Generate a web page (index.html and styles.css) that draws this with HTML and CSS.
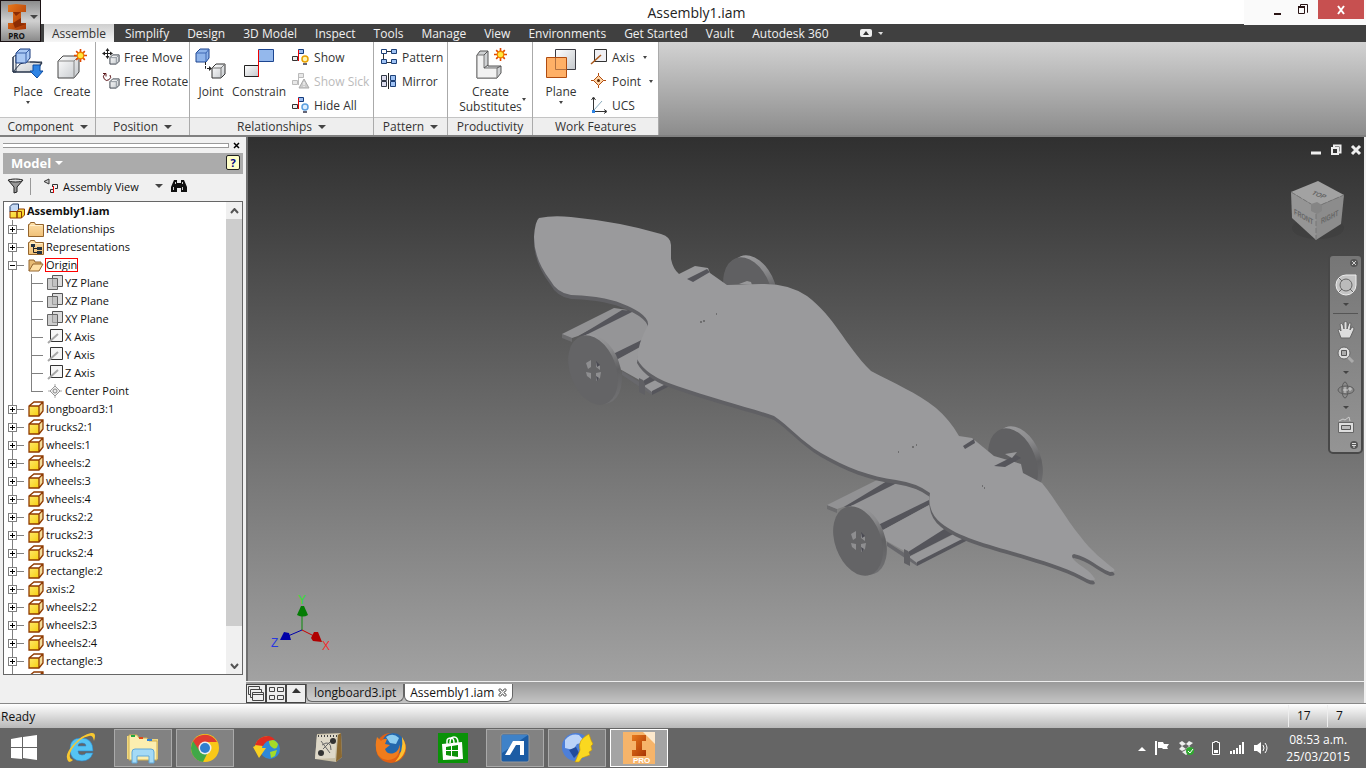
FILE: index.html
```html
<!DOCTYPE html>
<html lang="en">

<head>
    <meta charset="UTF-8">
    <meta name="viewport" content="width=device-width, initial-scale=1.0">
    <title>Assembly1.iam</title>
    <link rel="stylesheet" href="styles.css">
</head>

<body>
    <!-- shared icons -->
    <svg class="defs" aria-hidden="true">
        <defs>
            <linearGradient id="steel" x1="0" y1="0" x2="1" y2="1">
                <stop offset="0" stop-color="#fff" />
                <stop offset="1" stop-color="#c4c8cc" />
            </linearGradient>
            <linearGradient id="gold" x1="0" y1="0" x2="1" y2="1">
                <stop offset="0" stop-color="#ffe96a" />
                <stop offset="1" stop-color="#f5cf10" />
            </linearGradient>
            <linearGradient id="folder" x1="0" y1="0" x2="0" y2="1">
                <stop offset="0" stop-color="#ffe0a8" />
                <stop offset="1" stop-color="#efc078" />
            </linearGradient>
            <linearGradient id="rust" x1="0" y1="0" x2="1" y2="1">
                <stop offset="0" stop-color="#e8791c" />
                <stop offset="1" stop-color="#a83404" />
            </linearGradient>
        </defs>
        <symbol id="i-cube" viewBox="0 0 12 12">
            <path d="M1 4l3-3h7v7l-3 3H1z" fill="url(#steel)" stroke="#333a44" />
            <path d="M1 4h7v7M8 4l3-3" fill="none" stroke="#8a9098" />
        </symbol>
        <symbol id="i-part" viewBox="0 0 16 16">
            <path d="M1 5l5-4h9l-4 4z" fill="#fff" />
            <path d="M1 5h10v10H1z" fill="url(#gold)" />
            <path d="M11 5l4-4v9l-4 5z" fill="#f3dc9c" />
            <path d="M1 5l5-4h9v9l-4 5H1zM1 5h10v10M11 5l4-4" fill="none" stroke="#8f3a00" stroke-width="1.3" />
        </symbol>
        <symbol id="i-folder" viewBox="0 0 16 16">
            <path d="M.5 3.500h1l1-2h4l1 2h8v12H.5z" fill="url(#folder)" stroke="#94642c" />
            <path d="M2 4.500h12" stroke="#fff0cc" />
        </symbol>
        <symbol id="i-plane" viewBox="0 0 16 16">
            <path d="M5.500 .5h10v11h-10z" fill="#ddd" stroke="#555" />
            <path d="M.5 3.500h10v11H.5z" fill="#b8b8b8" fill-opacity=".7" stroke="#666" />
        </symbol>
        <symbol id="i-axis" viewBox="0 0 16 16">
            <path d="M3.500 .5h12v12h-12z" fill="#f6f6f6" stroke="#333" />
            <path d="M1 14L11 5" stroke="#a8a8a8" stroke-width="2" />
        </symbol>
        <symbol id="i-burst" viewBox="0 0 12 12">
            <path d="M6 0v12M0 6h12M2 2l8 8M10 2l-8 8" stroke="#e04800" stroke-width="1.5" />
            <circle cx="6" cy="6" r="3" fill="#ffe83c" stroke="#f08000" stroke-width="1.2" />
        </symbol>
        <symbol id="i-rel" viewBox="0 0 18 18">
            <path d="M6.500 1.500h5v4h-5z" fill="#9cbcee" stroke="#123a7c" />
            <path d="M.5 8.500h5v4h-5z" fill="#eee" stroke="#333" />
            <path d="M6.500 2v11" stroke="#e00" />
        </symbol>
    </svg>

    <header class="header">
        <button class="app-btn" aria-label="Application menu">
            <svg width="24" height="28" viewBox="0 0 24 28">
                <path d="M3 2l8-1 10 1v7h-5v11h5v6l-9 1-9-1v-6h5V9H3z" fill="url(#rust)" />
                <path d="M8 9h8l-5 4zM8 20l8-5v5l5 1-11 4z" fill="#8c2c04" />
            </svg>
            <span class="arrow"></span>
            <b>PRO</b>
        </button>
        <div class="titlebar">
            <h1>Assembly1.iam</h1>
            <div class="win-btns">
                <button aria-label="Minimize"><svg width="12" height="12"><path d="M3 10h7" stroke="#2a1414" stroke-width="2" /></svg></button>
                <button aria-label="Restore"><svg width="12" height="12"><path d="M3.500 2V.5h7v8H10M1.500 3.500h6v6h-6z" fill="none" stroke="#2a1414" /><path d="M1 3h7" stroke="#2a1414" stroke-width="2" /></svg></button>
                <button class="close" aria-label="Close"><svg width="10" height="10"><path d="M2 1l6 8M8 1l-6 8" stroke="#fff" stroke-width="2" /></svg></button>
            </div>
        </div>
        <nav class="tabs">
            <button class="active">Assemble</button>
            <button>Simplify</button>
            <button>Design</button>
            <button>3D Model</button>
            <button>Inspect</button>
            <button>Tools</button>
            <button>Manage</button>
            <button>View</button>
            <button>Environments</button>
            <button>Get Started</button>
            <button>Vault</button>
            <button>Autodesk 360</button>
            <button class="collapse" aria-label="Minimize ribbon">
                <svg width="24" height="8"><rect width="12" height="8" rx="2" fill="#eee" /><path d="M3 6l3-4 3 4z" fill="#333" /><path d="M18 3h5l-2 3z" fill="#ddd" /></svg>
            </button>
        </nav>
    </header>

    <div class="ribbon">
        <section class="panel component">
            <div class="tools">
                <button class="big">
                    <svg width="32" height="32">
                        <path d="M1 9l3-2v17H1zM14 14h8l8 1-6 9H1l7-8z" fill="url(#steel)" stroke="#26344a" />
                        <path d="M1 9v15h22l7-10H18" fill="none" stroke="#26344a" />
                        <path d="M4 5l4-4h10v9l-4 5H4z" fill="#a9c8f4" stroke="#16387c" />
                        <path d="M4 5h10v10M14 5l4-4" fill="none" stroke="#3860a8" />
                        <path d="M21 17h7v6h3l-6 7-7-7h3z" fill="#2f84e4" stroke="#0d4da4" />
                    </svg>
                    Place<span class="arrow"></span>
                </button>
                <button class="big">
                    <svg width="32" height="32">
                        <path d="M2 13l5-5h16v16l-5 6H2z" fill="url(#steel)" stroke="#444" />
                        <path d="M2 13h16v17M18 13l5-5" fill="none" stroke="#888" />
                        <use href="#i-burst" x="18" y="1" width="13" height="13" />
                    </svg>
                    Create
                </button>
            </div>
            <button class="panel-name">Component <span class="arrow wide"></span></button>
        </section>

        <section class="panel position">
            <div class="tools">
                <div class="list">
                    <button>
                        <svg width="18" height="18"><path d="M5.500 1v8M1 5.500h8" stroke="#222" /><path d="M3.500 3l2-3 2 3zM3.500 8l2 3 2-3zM3 3.500l-3 2 3 2zM8 3.500l3 2-3 2z" fill="#222" /><use href="#i-cube" x="7" y="6" width="11" height="11" /></svg>
                        Free Move
                    </button>
                    <button>
                        <svg width="18" height="18"><path d="M3 2a3.500 3.500 0 1 0 5 1M1 1.500h3v3" fill="none" stroke="#5a1418" /><use href="#i-cube" x="7" y="6" width="11" height="11" /></svg>
                        Free Rotate
                    </button>
                </div>
            </div>
            <button class="panel-name">Position <span class="arrow wide"></span></button>
        </section>

        <section class="panel relationships">
            <div class="tools">
                <button class="big">
                    <svg width="32" height="32">
                        <path d="M1 5l4-4h9v9l-3 4H1z" fill="#8fb4ea" stroke="#1c4590" />
                        <path d="M1 5h10v9M11 5l3-4" fill="none" stroke="#3e69b4" />
                        <path d="M10.500 14v6.500H16" fill="none" stroke="#222" stroke-dasharray="3 1" />
                        <path d="M14 18l3 2.500-3 2.500z" fill="#222" />
                        <path d="M17 20l4-4h9v10l-4 4h-9z" fill="url(#steel)" stroke="#333" />
                        <path d="M17 20h9v10M26 20l4-4" fill="none" stroke="#777" />
                    </svg>
                    Joint
                </button>
                <button class="big">
                    <svg width="32" height="32">
                        <path d="M15.500 1.500h15v12h-15z" fill="#94b8ec" stroke="#1c4590" />
                        <path d="M1.500 17.500h14v11h-14z" fill="url(#steel)" stroke="#222" />
                        <path d="M15.500 2v27" stroke="#f00000" />
                    </svg>
                    Constrain
                </button>
                <div class="list">
                    <button>
                        <svg width="18" height="18"><use href="#i-rel" width="18" height="18" /><circle cx="13" cy="11" r="3" fill="#fff6b0" stroke="#e8a000" stroke-width="1.5" /><path d="M11 15h4v2h-4z" fill="#667" /></svg>
                        Show
                    </button>
                    <button disabled>
                        <svg width="18" height="18"><path d="M6.500 1.500h5v4h-5zM.5 8.500h5v4h-5zM6.500 2v11" fill="#e8e8e8" stroke="#bbb" /><path d="M12 7l5 9H7z" fill="#ccc" stroke="#aaa" /><path d="M12 10v3M12 14v1" stroke="#fff" /></svg>
                        Show Sick
                    </button>
                    <button>
                        <svg width="18" height="18"><use href="#i-rel" width="18" height="18" /><circle cx="13" cy="11" r="3" fill="#dceeff" stroke="#5b9fe0" stroke-width="1.5" /><path d="M11 15h4v2h-4z" fill="#667" /></svg>
                        Hide All
                    </button>
                </div>
            </div>
            <button class="panel-name">Relationships <span class="arrow wide"></span></button>
        </section>

        <section class="panel pattern">
            <div class="tools">
                <div class="list">
                    <button>
                        <svg width="18" height="18"><path d="M4 3.500h10M3.500 4v10M14 14.500H4" stroke="#333" /><g stroke="#1c4078"><path d="M1.500 1.500h5v4h-5z" fill="#fff" /><path d="M11.500 1.500h5v4h-5zM1.500 11.500h5v4h-5zM11.500 11.500h5v4h-5z" fill="#9fc2f4" /></g></svg>
                        Pattern
                    </button>
                    <button>
                        <svg width="18" height="18"><path d="M1.500 3.500h5v5h-5zM1.500 9.500h5v5h-5z" fill="#dde" stroke="#333a48" /><path d="M10.500 3.500h5v5h-5zM10.500 9.500h5v5h-5z" fill="#9fc2f4" stroke="#1c4078" /><path d="M8.500 1v16" stroke="#222" /></svg>
                        Mirror
                    </button>
                </div>
            </div>
            <button class="panel-name">Pattern <span class="arrow wide"></span></button>
        </section>

        <section class="panel productivity">
            <div class="tools">
                <button class="big">
                    <svg width="32" height="32">
                        <path d="M2 7l3-4h8v15h13v7l-4 5H2z" fill="#d0d2d4" stroke="#555" />
                        <path d="M2 7h7v13h13v10H2z" fill="#f2f2f2" stroke="#777" />
                        <path d="M9 7l4-4M9 20l4-3M22 20l4-2" stroke="#555" />
                        <use href="#i-burst" x="19" y="0" width="13" height="13" />
                    </svg>
                    Create<br>Substitutes
                </button>
                <span class="arrow side"></span>
            </div>
            <div class="panel-name">Productivity</div>
        </section>

        <section class="panel work">
            <div class="tools">
                <button class="big">
                    <svg width="32" height="32">
                        <path d="M10.500 1.500h20v20h-20z" fill="url(#steel)" stroke="#3c3c44" />
                        <path d="M1.500 9.500h20v20h-20z" fill="#ffb066" stroke="#b04c10" />
                        <path d="M10.500 10v11.500H21" fill="none" stroke="#b07040" />
                    </svg>
                    Plane<span class="arrow"></span>
                </button>
                <div class="list">
                    <button>
                        <svg width="18" height="18"><path d="M4.500 1.500h12v12h-12z" fill="#f0f0f4" stroke="#333" /><path d="M1 16L11 7" stroke="#a8591c" stroke-width="1.5" /></svg>
                        Axis <span class="arrow"></span>
                    </button>
                    <button>
                        <svg width="18" height="18"><path d="M8.500 1v15M1 8.500h15" stroke="#b04c10" /><path d="M8.500 3.500l5 5-5 5-5-5z" fill="#ffd4a4" stroke="#b04c10" /><circle cx="8.500" cy="8.500" r="1.500" fill="#5c2400" /></svg>
                        Point <span class="arrow"></span>
                    </button>
                    <button>
                        <svg width="18" height="18"><path d="M3.500 2v13.500H16M1.500 4l2-3 2 3M14 13.500l3 2-3 2" fill="none" stroke="#333" /><path d="M4 14l8-9" stroke="#8ab" /><path d="M2 14h3v3H2z" fill="#2f84e4" /></svg>
                        UCS
                    </button>
                </div>
            </div>
            <div class="panel-name">Work Features</div>
        </section>
    </div>

    <main class="main">
        <aside class="browser">
            <div class="grip"><span></span><button aria-label="Close browser"><svg width="8" height="7"><path d="M1 1l5 5M6 1L1 6" stroke="#000" stroke-width="1.5" /></svg></button></div>
            <div class="model-bar">
                <button class="model-name">Model <span class="arrow wide"></span></button>
                <button class="help" aria-label="Help">?</button>
            </div>
            <div class="browser-tools">
                <button aria-label="Filter"><svg width="17" height="16"><path d="M1 2h15l-6 7v5l-3 1V9z" fill="#999" stroke="#222" /><ellipse cx="8.500" cy="2.500" rx="7" ry="1.500" fill="#ddd" stroke="#222" /></svg></button>
                <span class="sep"></span>
                <button class="view-select">
                    <svg width="16" height="16"><path d="M1 3.500L6 1v5z" fill="#ccc" stroke="#333" /><path d="M9.500 9V6.500h5v4H12M7.500 11.500h3v3h-3z" fill="none" stroke="#333" /><path d="M10.500 8v7" stroke="#e00" /></svg>
                    Assembly View <span class="arrow wide"></span>
                </button>
                <button aria-label="Find"><svg width="16" height="14"><path d="M3 1h3v3h4V1h3l3 7v5h-6V9H6v4H0V8z" fill="#111" /><path d="M2.500 8v3M11.500 8v3M4.500 3v2M11.500 3v2" stroke="#ccc" /></svg></button>
            </div>
            <div class="tree-box">
                <ul class="tree">
                    <li class="root"><svg><path d="M1 3.500L3.500 1h6v8H1z" fill="#c5d9f4" stroke="#223c66" /><path d="M1 8.500h7V15H1zM8 8.500L10 6h5.500v6l-3 3H8zM8 8.500h4.500V15" fill="url(#gold)" stroke="#8f3a00" /></svg><b>Assembly1.iam</b></li>
                    <li class="node"><button class="toggle plus" aria-label="Expand"></button><svg><use href="#i-folder" /></svg>Relationships</li>
                    <li class="node"><button class="toggle plus" aria-label="Expand"></button><svg><use href="#i-folder" /><path d="M3 5h4v3H3zM9 8h5v3H9zM9 12h5v3H9z" fill="#234" /><path d="M5.500 8v5.500H9M5 9.500h4" fill="none" stroke="#222" /></svg>Representations</li>
                    <li class="node"><button class="toggle" aria-label="Collapse"></button><svg><path d="M1 14V3h5l1 2h6v3" fill="#e8bc74" stroke="#94642c" /><path d="M1 14L5 7h10l-4 7z" fill="#ffe0a4" stroke="#94642c" /></svg><span class="picked">Origin</span></li>
                    <li class="child"><svg><use href="#i-plane" /></svg>YZ Plane</li>
                    <li class="child"><svg><use href="#i-plane" /></svg>XZ Plane</li>
                    <li class="child"><svg><use href="#i-plane" /></svg>XY Plane</li>
                    <li class="child"><svg><use href="#i-axis" /></svg>X Axis</li>
                    <li class="child"><svg><use href="#i-axis" /></svg>Y Axis</li>
                    <li class="child"><svg><use href="#i-axis" /></svg>Z Axis</li>
                    <li class="child last"><svg><path d="M8 1v14M1 8h14" stroke="#aaa" /><path d="M8 3l5 5-5 5-5-5z" fill="#eee" stroke="#999" /><circle cx="8" cy="8" r="2" fill="none" stroke="#888" /></svg>Center Point</li>
                    <li class="node"><button class="toggle plus" aria-label="Expand"></button><svg><use href="#i-part" /></svg>longboard3:1</li>
                    <li class="node"><button class="toggle plus" aria-label="Expand"></button><svg><use href="#i-part" /></svg>trucks2:1</li>
                    <li class="node"><button class="toggle plus" aria-label="Expand"></button><svg><use href="#i-part" /></svg>wheels:1</li>
                    <li class="node"><button class="toggle plus" aria-label="Expand"></button><svg><use href="#i-part" /></svg>wheels:2</li>
                    <li class="node"><button class="toggle plus" aria-label="Expand"></button><svg><use href="#i-part" /></svg>wheels:3</li>
                    <li class="node"><button class="toggle plus" aria-label="Expand"></button><svg><use href="#i-part" /></svg>wheels:4</li>
                    <li class="node"><button class="toggle plus" aria-label="Expand"></button><svg><use href="#i-part" /></svg>trucks2:2</li>
                    <li class="node"><button class="toggle plus" aria-label="Expand"></button><svg><use href="#i-part" /></svg>trucks2:3</li>
                    <li class="node"><button class="toggle plus" aria-label="Expand"></button><svg><use href="#i-part" /></svg>trucks2:4</li>
                    <li class="node"><button class="toggle plus" aria-label="Expand"></button><svg><use href="#i-part" /></svg>rectangle:2</li>
                    <li class="node"><button class="toggle plus" aria-label="Expand"></button><svg><use href="#i-part" /></svg>axis:2</li>
                    <li class="node"><button class="toggle plus" aria-label="Expand"></button><svg><use href="#i-part" /></svg>wheels2:2</li>
                    <li class="node"><button class="toggle plus" aria-label="Expand"></button><svg><use href="#i-part" /></svg>wheels2:3</li>
                    <li class="node"><button class="toggle plus" aria-label="Expand"></button><svg><use href="#i-part" /></svg>wheels2:4</li>
                    <li class="node"><button class="toggle plus" aria-label="Expand"></button><svg><use href="#i-part" /></svg>rectangle:3</li>
                    <li><span class="stem"></span><svg><use href="#i-part" /></svg></li>
                </ul>
                <div class="scrollbar">
                    <button aria-label="Scroll up"><svg width="9" height="6"><path d="M1 5l3.500-4L8 5" fill="none" stroke="#555" stroke-width="2" /></svg></button>
                    <div class="track"><div class="thumb"></div></div>
                    <button aria-label="Scroll down"><svg width="9" height="6"><path d="M1 1l3.500 4L8 1" fill="none" stroke="#555" stroke-width="2" /></svg></button>
                </div>
            </div>
        </aside>

        <section class="work-area">
            <div class="viewport">
                <svg class="scene" viewBox="247 136 1116 544" preserveAspectRatio="xMinYMin meet">
                    <defs>
                        <linearGradient id="rim" x1="0" y1="0" x2="0" y2="1">
                            <stop offset="0" stop-color="#9a9a9c" />
                            <stop offset=".3" stop-color="#8a8a8c" />
                            <stop offset=".6" stop-color="#606062" />
                            <stop offset="1" stop-color="#707072" />
                        </linearGradient>
                        <g id="back-wheel">
                            <ellipse cx="1017" cy="460" rx="23" ry="36" transform="rotate(-20 1017 460)" fill="url(#rim)" />
                            <ellipse cx="1012" cy="462" rx="23" ry="36" transform="rotate(-20 1012 462)" fill="#606062" />
                        </g>
                        <g id="truck">
                            <path d="M826 504l10 4v4l-10-4z" fill="#6c6c6e" />
                            <path d="M826 504l52-26 14 2-50 26-6 2z" fill="#929294" />
                            <path d="M843 506l43-26 12 1-41 24z" fill="#55555b" />
                            <path d="M850 505l48-24 30 12v7l-48 26z" fill="#959597" />
                            <path d="M877 524l51-25v5l-46 25z" fill="#55555b" />
                            <path d="M882 529l46-25 6 12 16 12-43 24-25-14z" fill="#98989a" />
                            <path d="M886 541l30 19v5l-30-20z" fill="#68686c" />
                            <path d="M907 551l41-26 10 5-49 25z" fill="#55555b" />
                            <path d="M908 556l49-25 10 5-51 26z" fill="#98989a" />
                            <path d="M916 561l51-26 2 3-53 27z" fill="#55555b" />
                            <path d="M903 548l4 2 2 5v10l-6-3z" fill="#606064" />
                        </g>
                        <g id="front-wheel">
                            <ellipse cx="861" cy="539" rx="23" ry="36" transform="rotate(-20 861 539)" fill="url(#rim)" />
                            <ellipse cx="857" cy="540" rx="23" ry="36" transform="rotate(-20 857 540)" fill="#646466" />
                            <path d="M850 533l5-3v7l-3 2zM850 542l5 1v6l-4-3zM860 532l4 4v4l-4-3zM860 543l5-1-1 6-4 3z" fill="#8e8e90" />
                            <path d="M860 531l4 4-3 2zM860 546l3 2-2 3z" fill="#4a4a52" />
                        </g>
                        <path id="board" d="M538 217Q552 214 570 216Q620 221 660 233Q670 236 670 244L670 258Q672 268 678 273L694 265L707 267L709 272L726 284L760 283Q787 282 806 295C834 316 843 343 870 370C893 382 916 392 935 407Q949 419 958 435L971 437L993 455L1020 463L1022 472L1041 482C1055 499 1065 518 1079 535C1091 551 1102 559 1113 568Q1115 571 1109 571C1096 566 1088 556 1073 553Q1069 554 1073 559C1079 565 1090 570 1094 578Q1093 581 1086 578C1070 569 1050 562 1026 555C990 544 958 537 940 522Q926 511 929 492Q916 482 895 479C870 476 844 466 820 452C800 440 788 425 773 415C750 407 710 397 676 385Q645 375 636 358Q637 342 647 324Q648 318 638 311C618 299 600 295 570 294Q556 292 549 279Q533 258 533 236Q534 220 538 217Z" />
                    </defs>
                    <use href="#back-wheel" />
                    <use href="#back-wheel" x="-265" y="-171" />
                    <use href="#truck" />
                    <use href="#truck" x="-265" y="-171" />
                    <use href="#board" y="4" fill="#606064" />
                    <use href="#board" fill="#9a9a9c" />
                    <use href="#front-wheel" />
                    <use href="#front-wheel" x="-265" y="-171" />
                    <path d="M686 278l20-10 3 3-17 10zM962 445l11-7 1 4-10 6zM993 465l22-11 5 3-16 9z" fill="#55555b" />
                    <path d="M738 283l8-3 4 1 1 3zM1004 453l12-2-5 6z" fill="#98989a" />
                    <path d="M699 321h2M702 320h2M715 313h1M897 451h1M911 446h2M915 444h1M981 485h1M983 487h1" stroke="#444" />
                    <g font-family="Liberation Sans" font-size="12">
                        <path d="M301 629v-16" stroke="#0a8a0a" /><path d="M296 614l4-9h3l4 9q-5 3-11 0z" fill="#047c04" />
                        <path d="M301 629l12 6" stroke="#c00" /><path d="M310 637l3-6h4l4 10-9-1z" fill="#b00000" />
                        <path d="M301 629l-14 6" stroke="#00a" /><path d="M279 639l4-8 5 1 2 7z" fill="#0000a8" />
                        <text x="297" y="603" fill="#30e030">Y</text>
                        <text x="321" y="649" fill="#f03030">X</text>
                        <text x="270" y="646" fill="#2838e0">Z</text>
                    </g>
                </svg>
                <div class="doc-btns">
                    <button aria-label="Minimize document"><svg width="12" height="12"><path d="M1 9h10" stroke="#eee" stroke-width="3" /></svg></button>
                    <button aria-label="Restore document"><svg width="12" height="12"><path d="M4 3V1.500h6.500v7H9M2 4h6v6H2z" fill="none" stroke="#eee" stroke-width="2" /></svg></button>
                    <button aria-label="Close document"><svg width="12" height="12"><path d="M2 2l8 8M10 2l-8 8" stroke="#eee" stroke-width="3" /></svg></button>
                </div>
                <svg class="cube" width="62" height="68">
                    <ellipse cx="31" cy="52" rx="26" ry="11" fill="#333" opacity=".25" />
                    <path d="M4 16L31 5l26 14-28 12z" fill="#a2a2a2" />
                    <path d="M4 16l25 15v33L5 42z" fill="#959595" />
                    <path d="M57 19L29 31v33l25-16z" fill="#8c8c8c" />
                    <path d="M4 16l25 15 28-12M29 31v33" fill="none" stroke="#777" stroke-dasharray="5 2" />
                    <path d="M24 28l6-2 5 3v6l-5 3-6-3z" fill="#858585" />
                    <g font-family="Liberation Sans" font-weight="bold" font-size="8" fill="#666">
                        <text transform="matrix(.8 .3 -.6 .6 24 18)">TOP</text>
                        <text transform="matrix(.7 .4 0 1 7 38)">FRONT</text>
                        <text transform="matrix(.7 -.35 0 1 34 48)">RIGHT</text>
                    </g>
                </svg>
                <div class="navbar">
                    <button class="mini" aria-label="Close navigation bar"><svg width="8" height="8"><circle cx="4" cy="4" r="4" fill="#555" /><path d="M2 2l4 4M6 2L2 6" stroke="#ccc" /></svg></button>
                    <button aria-label="Steering wheel"><svg width="22" height="22"><path d="M11 1h10v10a10 10 0 1 1-10-10z" fill="#c4c4c4" stroke="#eee" /><circle cx="11" cy="11" r="6" fill="#bbb" stroke="#666" /><path d="M4 4l3 3M15 15l3 3M4 18l3-3" stroke="#666" /></svg></button>
                    <span class="arrow"></span>
                    <hr>
                    <button aria-label="Pan"><svg width="18" height="18"><path d="M4 17L1 9q1-2 3 1L3 3q2-2 3 1l1 4V1q2-1 3 0v7l2-6q2-1 2 1l-1 6 2-3q2 0 2 2l-4 9z" fill="#ddd" stroke="#666" /></svg></button>
                    <button aria-label="Zoom"><svg width="18" height="18"><path d="M10 10l6 6" stroke="#aaa" stroke-width="3" /><circle cx="7" cy="7" r="6" fill="#ddd" stroke="#666" /><path d="M4.500 4.500h5v5h-5z" fill="#aaa" stroke="#555" /></svg></button>
                    <span class="arrow"></span>
                    <button aria-label="Orbit"><svg width="18" height="18"><ellipse cx="9" cy="9" rx="8" ry="4" fill="none" stroke="#5c5c5c" /><ellipse cx="8" cy="9" rx="3" ry="8" fill="none" stroke="#5c5c5c" /><path d="M8 6v6M6 9h5M13 6v4M11 8h4" stroke="#ccc" /></svg></button>
                    <span class="arrow"></span>
                    <button aria-label="Look at"><svg width="18" height="18"><path d="M2 5l4-2 2 1 4-3 1 4" fill="none" stroke="#ccc" /><path d="M1.500 6.500h15v10h-15z" fill="#ddd" stroke="#666" /><path d="M4.500 9.500h9v4h-9z" fill="#bbb" stroke="#555" /></svg></button>
                    <button class="mini" aria-label="Navigation bar options"><svg width="8" height="8"><circle cx="4" cy="4" r="4" fill="#555" /><path d="M2 2.500h4M2 4.500h4M3 6h2" stroke="#ddd" /></svg></button>
                </div>
            </div>
            <div class="doc-bar">
                <button class="square" aria-label="Cascade"><svg width="17" height="17"><g fill="#eee" stroke="#444"><path d="M.5 1.500h11v8H.5z" /><path d="M2.500 4.500h11v8h-11z" /><path d="M4.500 7.500h11v8h-11zM5 9.500h10" /></g></svg></button>
                <button class="square" aria-label="Arrange"><svg width="17" height="17"><path d="M1.500 2.500h5v4h-5zM9.500 2.500h6v4h-6zM1.500 10.500h5v4h-5zM9.500 10.500h6v4h-6z" fill="#eee" stroke="#444" /></svg></button>
                <button class="square" aria-label="More documents"><svg width="17" height="17"><path d="M4 8l4-5 5 5z" fill="#333" /></svg></button>
                <button class="doc">longboard3.ipt</button>
                <button class="doc current">Assembly1.iam <svg width="9" height="9"><path d="M1 1h2l1 2h1l1-2h2v2L6 4v1l2 1v2H6L5 6H4L3 8H1V6l2-1V4L1 3z" fill="#fff" stroke="#666" /></svg></button>
            </div>
        </section>
    </main>

    <footer class="status">
        <span class="ready">Ready</span>
        <span class="cell">17</span>
        <span class="cell">7</span>
    </footer>

    <div class="taskbar">
        <button class="start" aria-label="Start"><svg width="28" height="28"><path d="M1 5l11-2v10H1zM13 3l14-2v12H13zM1 14h11v11L1 24zM13 14h14v12l-14-2z" fill="#fff" /></svg></button>
        <button class="app" aria-label="Internet Explorer"><svg width="32" height="32"><path d="M28 19H13q0 4 4 4 3 0 4-2h7q-3 8-11 8Q5 29 5 17 5 6 16 6q12 0 12 13zM13 14h8q0-3-4-3t-4 3z" fill="#55c4f4" stroke="#2c86cc" stroke-width=".6" /><path d="M4 30q-6-6 4-17T26 1q6-1 3 8-1-6-5-5Q14 6 7 17 2 26 8 28q-2 2-4 2z" fill="#f8c830" /></svg></button>
        <button class="app open" aria-label="File Explorer"><svg width="34" height="32"><path d="M1 4h9l2 3h20v20H1z" fill="#f0d880" /><path d="M3 3h8l2 3h8l2 3h8v19H3z" fill="#fbeeb0" stroke="#d0b050" /><path d="M5 3h4v2H5z" fill="#20a840" /><path d="M13 5h4v2h-4z" fill="#e04818" /><path d="M21 7h5v2h-5z" fill="#3080d8" /><path d="M6 31V20q0-3 3-3h16q3 0 3 3v11h-5v-7H11v7z" fill="#a4daf6" stroke="#60a8d8" /></svg></button>
        <button class="app open" aria-label="Chrome"><svg width="30" height="30"><circle cx="15" cy="15" r="14" fill="#f8c818" /><path d="M15 15L3 8a14 14 0 0 0 10 21l5-10z" fill="#40a848" /><path d="M15 9h12a14 14 0 0 0-24-1l6 9z" fill="#e03c30" /><circle cx="15" cy="15" r="6.500" fill="#eee" /><circle cx="15" cy="15" r="5" fill="#2f7fd0" /></svg></button>
        <button class="app" aria-label="Download Manager"><svg width="30" height="30"><circle cx="18" cy="16" r="10" fill="#2f88d8" /><path d="M17 8q5-3 9 3-1 6-5 4t-4-7zM18 19l7-2-2 6-4 2z" fill="#a4dc28" /><path d="M3 13q2-9 13-10-5 4-6 12l4 0-7 10-6-11z" fill="#f8d020" /><path d="M3 12Q6 3 17 3q4 1 6 4-9-1-12 6z" fill="#e02c20" /></svg></button>
        <button class="app" aria-label="Script Editor"><svg width="32" height="32"><path d="M4 2l24-1 1 24-6 5-21-3z" fill="#c8bfa6" /><path d="M4 3l20-1-2 24-20 1z" fill="#ded8c8" /><path d="M28 1l1 24-6 5 2-27z" fill="#8a6830" /><path d="M5 4h20" stroke="#444" stroke-width="2" stroke-dasharray="1 2" /><path d="M8 9l9 12M18 9l-8 8M9 13q9-6 9 5" fill="none" stroke="#666" /><circle cx="20" cy="9" r="3" fill="#333" /><circle cx="8" cy="21" r="3" fill="#333" /></svg></button>
        <button class="app" aria-label="Firefox"><svg width="32" height="32"><circle cx="16" cy="16" r="15" fill="#e06014" /><circle cx="18" cy="12" r="11" fill="#2468ac" /><path d="M11 5q7-5 13 1l-3 6-6-1z" fill="#8cccf0" /><path d="M2 5l4 4q3-3 6-2l-2 5 5 1-5 4q2 6 9 4 6-3 5-9 3 8-4 14-10 5-17-3Q-1 15 2 5z" fill="#f07c1c" /><path d="M27 5q5 8 3 14-3 8-10 11 9-10 7-25z" fill="#fcc030" /></svg></button>
        <button class="app" aria-label="Store"><svg width="30" height="30"><path d="M0 0h30v30H0z" fill="#0a9208" /><path d="M4 11l20-2 1 17-20 1z" fill="#fff" /><path d="M9 11V8q0-3 4-3 3 0 3 5M12 10q0-6 4-6 4 0 4 6" fill="none" stroke="#fff" stroke-width="1.500" /><path d="M8 14l5-1v4H8zM14 13l6-1v5h-6zM8 18h5v5l-5-1zM14 18h6v6l-6-1z" fill="#0a9208" /></svg></button>
        <button class="app open" aria-label="ASUS"><svg width="30" height="30"><rect x="1" y="1" width="28" height="28" rx="2" fill="#1c5ca4" stroke="#999" /><path d="M2 2h26L2 20z" fill="#3f82c8" /><path d="M5 22L13 8h11v14h-4V12h-4l-6 10z" fill="#fff" /></svg></button>
        <button class="app open" aria-label="Waterfox"><svg width="32" height="32"><circle cx="15" cy="15" r="14" fill="#4d7fd8" /><path d="M4 8q6-7 14-5l6 7-8 2-4 6-8-2z" fill="#bcd4f8" /><path d="M8 18l7-3 3 6-5 5z" fill="#224c9c" /><path d="M28 2q-12 6-9 16l-5 12 4 0 3-4 8-3-1-3 3-2-1-4 2-2-2-4z" fill="#fad820" stroke="#c89400" stroke-width=".6" /></svg></button>
        <button class="app open focused" aria-label="Inventor">
            <svg width="32" height="32"><path d="M0 0h32v32H0z" fill="#f6b46a" /><path d="M20 0h12v12z" fill="#fce8cc" /><path d="M9 3h14v6h-4v9h4v6H9v-6h4V9H9z" fill="url(#rust)" /><text x="10" y="31" font-family="Liberation Sans" font-size="8" font-weight="bold" fill="#fff">PRO</text></svg>
        </button>
        <div class="tray">
            <svg width="8" height="5"><path d="M0 5l4-4 4 4z" fill="#fff" /></svg>
            <svg width="16" height="16"><path d="M2 1v14" stroke="#fff" stroke-width="2" /><path d="M4 2h5l1 2h5l-2 3 1 2H9L8 8H4z" fill="#fff" /></svg>
            <svg width="17" height="16"><path d="M4 1l4 3-4 2-3-3zM11 1l4 2-4 3-3-2zM4 6l4 3-4 2-3-2zM11 6l4 3-3 2-4-2zM4 12l4-2 4 2-4 3z" fill="#eee" /><circle cx="12" cy="11" r="4" fill="#30a830" /><path d="M10 11l2 2 3-4" fill="none" stroke="#fff" /></svg>
            <svg class="battery" width="10" height="16"><path d="M3.500 2.500v-1h3v1h2v12h-7v-12z" fill="#555" stroke="#fff" /><path d="M3 10h4v3H3z" fill="#fff" /></svg>
            <svg width="16" height="14"><path d="M1 10h2v3H1zM4 9h2v4H4zM7 7h2v6H7zM10 4h2v9h-2zM13 1h2v12h-2z" fill="#fff" /></svg>
            <svg width="15" height="14"><path d="M1 4h3l4-3v12L4 10H1z" fill="#fff" /><path d="M10 4q2 3 0 6M12 2q4 5 0 10" fill="none" stroke="#fff" /></svg>
            <time class="clock" datetime="2015-03-25T08:53">08:53 a.m.<br>25/03/2015</time>
        </div>
    </div>
</body>

</html>
```
FILE: styles.css
```css
* {
    box-sizing: border-box;
}

body {
    margin: 0;
    height: 100vh;
    display: flex;
    flex-direction: column;
    overflow: hidden;
    background-color: #f0f0f0;
    font-family: "Open Sans", "Noto Sans", sans-serif;
    font-size: 12px;
    color: #333;
}

button {
    display: flex;
    align-items: center;
    margin: 0;
    padding: 0;
    border: none;
    background: none;
    font: inherit;
    color: inherit;
    white-space: nowrap;
}

svg {
    display: block;
    flex-shrink: 0;
}

.defs {
    position: absolute;
    width: 0;
    height: 0;
}

.arrow {
    display: inline-block;
    flex-shrink: 0;
    border: 2px solid transparent;
    border-top: 3px solid #444;
    border-bottom: none;
}

.arrow.wide {
    border-width: 4px 4px 0;
}

/* header */
.header {
    display: grid;
    grid-template-columns: 41px 1fr;
    grid-template-rows: 24px 18px;
    background-color: #404040;
}

.app-btn {
    grid-row: 1 / 3;
    display: grid;
    grid-template-columns: 1fr 8px;
    align-items: center;
    justify-items: center;
    padding: 1px 2px;
    border: 1px solid #1a1214;
    background: linear-gradient(#8c8c8c, #d0d0d0 50%, #8a8a8a);
}

.app-btn .arrow {
    border-width: 4px 4px 0;
}

.app-btn b {
    font-size: 8px;
    line-height: 8px;
    color: #111;
}

.titlebar {
    display: grid;
    grid-template-columns: 1fr 122px;
    background-color: #fff;
}

.titlebar h1 {
    margin: 0;
    padding-left: 108px;
    font-size: 14px;
    font-weight: normal;
    line-height: 25px;
    text-align: center;
    color: #222;
}

.win-btns {
    display: flex;
    justify-content: flex-end;
    padding-right: 2px;
    background-color: #fafafa;
}

.win-btns button {
    width: 26px;
    height: 19px;
    justify-content: center;
}

.win-btns .close {
    width: 46px;
    margin-left: 2px;
    background-color: #c75050;
}

.tabs {
    display: flex;
    padding-left: 3px;
}

.tabs button {
    padding: 0 9px;
    color: #f0f0f0;
}

.tabs .active {
    padding: 0 8px;
    margin-right: 2px;
    background: linear-gradient(#cfcfcf, #f6f6f6);
    color: #333;
}

.tabs .collapse {
    padding-left: 22px;
}

/* ribbon */
.ribbon {
    display: flex;
    height: 95px;
    background: linear-gradient(#d2d2d2, #8c8c8c);
    border-bottom: 2px solid #808080;
}

.panel {
    display: flex;
    flex-direction: column;
    background-color: #fff;
    border-right: 1px solid #aaa;
}

.component { width: 96px; }
.position { width: 94px; }
.relationships { width: 184px; }
.pattern { width: 74px; }
.productivity { width: 85px; }
.work { width: 126px; }

.tools {
    flex: 1;
    display: flex;
    padding: 3px 5px 0 6px;
}

.big {
    flex-direction: column;
    align-self: flex-start;
    line-height: 15px;
    min-width: 44px;
    padding-top: 3px;
}

.big svg {
    margin-bottom: 4px;
}

.big .arrow {
    margin-top: 2px;
}

.list button {
    height: 24px;
    gap: 4px;
}

.list .arrow {
    margin-left: 4px;
}

.list button:disabled {
    color: #bbb;
}

.panel-name {
    display: flex;
    justify-content: center;
    gap: 6px;
    align-items: center;
    height: 18px;
    background-color: #eee;
    border-top: 1px solid #c4c4c4;
}

.relationships .tools {
    padding: 3px 0 0;
}

.relationships .big {
    min-width: 42px;
}

.relationships .list {
    margin-left: 6px;
}

.productivity .tools {
    justify-content: center;
}

.productivity .big {
    padding-left: 4px;
}

.side {
    align-self: flex-end;
    margin-bottom: 16px;
}

.work .tools {
    gap: 7px;
}

/* browser */
.main {
    flex: 1;
    min-height: 0;
    display: flex;
}

.browser {
    width: 246px;
    display: flex;
    flex-direction: column;
    padding: 0 3px 28px;
    font-size: 11px;
    color: #111;
}

.grip {
    display: flex;
    align-items: center;
    gap: 4px;
    height: 16px;
    padding-right: 2px;
}

.grip span {
    flex: 1;
    height: 5px;
    border: 1px solid #999;
    border-left: none;
    background-color: #fff;
}

.model-bar {
    display: flex;
    align-items: center;
    justify-content: space-between;
    height: 21px;
    padding: 0 3px 2px 8px;
    background-color: #ababab;
}

.model-name {
    gap: 4px;
    font-size: 13px;
    font-weight: bold;
    color: #fff;
}

.model-name .arrow {
    border-top-color: #fff;
}

.help {
    width: 14px;
    height: 15px;
    justify-content: center;
    border: 1px solid #222;
    border-radius: 2px;
    background-color: #ffffc8;
    font-weight: bold;
    color: #000080;
}

.browser-tools {
    display: flex;
    align-items: center;
    gap: 6px;
    height: 27px;
    padding: 0 0 3px 4px;
}

.sep {
    width: 1px;
    height: 17px;
    margin-right: 6px;
    background-color: #999;
}

.view-select {
    gap: 4px;
}

.view-select .arrow {
    margin: 0 2px 0 12px;
}

.tree-box {
    flex: 1;
    min-height: 0;
    display: flex;
    border: 1px solid #666;
    background-color: #fff;
}

.tree {
    flex: 1;
    margin: 0;
    padding: 0;
    overflow: hidden;
    list-style: none;
}

/* stem of the tree, one pixel wide, runs through every row */
.tree li {
    display: flex;
    align-items: center;
    height: 18px;
    padding-left: 4px;
    line-height: 16px;
    background: linear-gradient(#808080, #808080) 8px 0 / 1px 100% no-repeat;
}

.tree .node {
    background:
        linear-gradient(#808080, #808080) 8px 0 / 1px 100% no-repeat,
        linear-gradient(#808080, #808080) 12px 50% / 8px 1px no-repeat;
}

.tree li svg {
    width: 16px;
    height: 16px;
    margin-right: 2px;
}

.tree .root {
    padding-left: 5px;
    background: none;
}

.toggle {
    position: relative;
    width: 9px;
    height: 9px;
    margin-right: 11px;
    border: 1px solid #808080;
    background-color: #fff;
}

.toggle::before,
.toggle.plus::after {
    content: "";
    position: absolute;
    left: 1px;
    top: 3px;
    width: 5px;
    height: 1px;
    background-color: #000;
}

.toggle.plus::after {
    left: 3px;
    top: 1px;
    width: 1px;
    height: 5px;
}

.stem {
    width: 20px;
}

.tree .child {
    padding-left: 43px;
    background:
        linear-gradient(#808080, #808080) 8px 0 / 1px 100% no-repeat,
        linear-gradient(#808080, #808080) 27px 0 / 1px 100% no-repeat,
        linear-gradient(#808080, #808080) 27px 50% / 12px 1px no-repeat;
}

.tree .last {
    background:
        linear-gradient(#808080, #808080) 8px 0 / 1px 100% no-repeat,
        linear-gradient(#808080, #808080) 27px 0 / 1px 50% no-repeat,
        linear-gradient(#808080, #808080) 27px 50% / 12px 1px no-repeat;
}

.picked {
    line-height: 12px;
    outline: 1px solid #f00;
}

.scrollbar {
    display: flex;
    flex-direction: column;
    width: 16px;
    background-color: #f0f0f0;
}

.scrollbar button {
    height: 17px;
    justify-content: center;
}

.track {
    flex: 1;
}

.thumb {
    height: 93%;
    background-color: #cdcdcd;
}

/* viewport */
.work-area {
    flex: 1;
    min-width: 0;
    display: flex;
    flex-direction: column;
    padding-right: 2px;
}

.viewport {
    flex: 1;
    min-height: 0;
    position: relative;
    border-left: 2px solid #707070;
    background: linear-gradient(#303030, #a2a2a2);
}

.scene {
    position: absolute;
    inset: 0;
    width: 100%;
    height: 100%;
}

.doc-btns {
    position: absolute;
    top: 7px;
    right: 2px;
    display: flex;
    gap: 8px;
}

.cube {
    position: absolute;
    top: 39px;
    right: 15px;
}

.navbar {
    position: absolute;
    top: 117px;
    right: 1px;
    width: 35px;
    display: flex;
    flex-direction: column;
    align-items: center;
    gap: 7px;
    padding: 3px;
    border: 2px solid #484848;
    border-radius: 5px;
    background: linear-gradient(#767676, #949494);
}

.navbar .arrow {
    border-width: 3px 3px 0;
}

.navbar hr {
    width: 100%;
    margin: 0;
    border: none;
    border-top: 1px solid #555;
}

.navbar .mini {
    align-self: flex-end;
}

.doc-bar {
    display: flex;
    height: 22px;
    padding-top: 2px;
    border-top: 1px solid #eee;
    background: linear-gradient(#9a9a9a, #c4c4c4);
}

.square {
    width: 20px;
    justify-content: center;
    border: 1px solid #444;
    background-color: #eee;
}

.doc {
    height: 18px;
    gap: 4px;
    padding: 0 7px;
    border: 1px solid #666;
    border-top: none;
    border-radius: 0 0 6px 6px;
    background: linear-gradient(#b0b0b0, #d0d0d0);
    color: #111;
}

.doc.current {
    padding: 0 5px;
    background: #fff;
}

/* bottom bars */
.status {
    display: flex;
    align-items: center;
    height: 25px;
    border-top: 1px solid #888;
    background: linear-gradient(#fff, #b8b8b8);
    color: #111;
}

.ready {
    flex: 1;
    padding-left: 1px;
}

.cell {
    width: 39px;
    padding-left: 8px;
    border-left: 1px solid #eee;
    line-height: 22px;
}

.taskbar {
    display: flex;
    gap: 4px;
    height: 40px;
    background-color: #656565;
}

.start {
    width: 48px;
    justify-content: center;
}

.app {
    width: 58px;
    height: 38px;
    margin-top: 1px;
    justify-content: center;
}

.app.open {
    border: 1px solid #aaa;
    background-color: #828282;
}

.app.focused {
    border-color: #fff;
    background-color: #a4a4a4;
}

.tray {
    display: flex;
    align-items: center;
    gap: 8px;
    margin-left: auto;
    padding-right: 16px;
}

.battery {
    margin-left: 8px;
}

.clock {
    margin-left: 10px;
    line-height: 17px;
    text-align: center;
    color: #fff;
}
```
